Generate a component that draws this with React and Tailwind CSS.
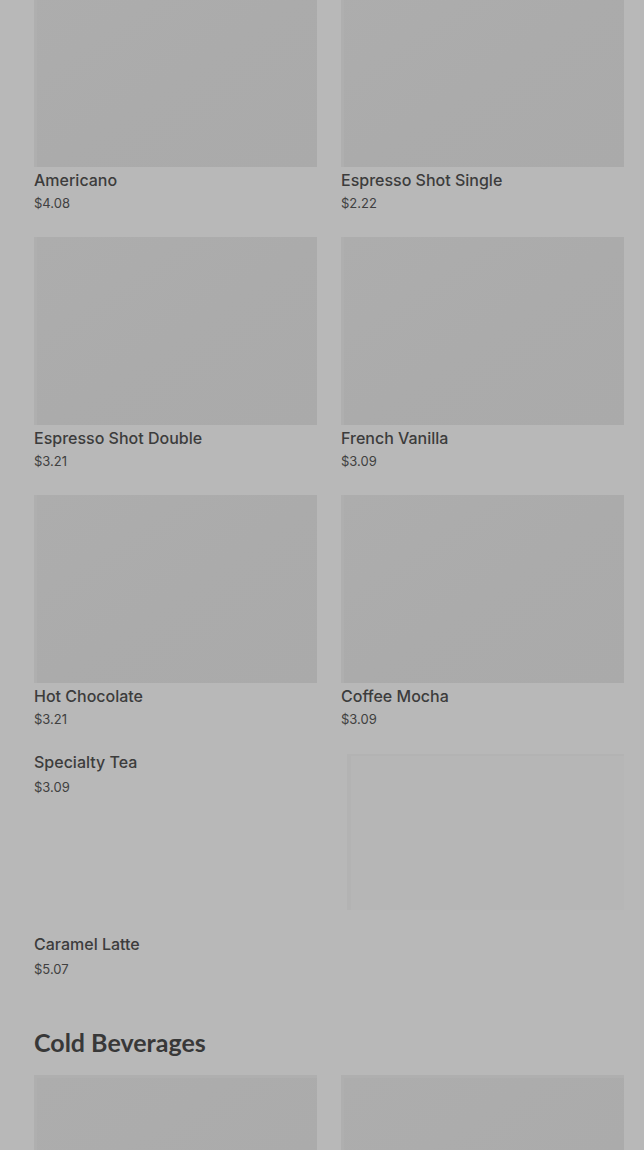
import React from "react";

const rows = [
  [
    { name: "Americano", price: "$4.08" },
    { name: "Espresso Shot Single", price: "$2.22" },
  ],
  [
    { name: "Espresso Shot Double", price: "$3.21" },
    { name: "French Vanilla", price: "$3.09" },
  ],
  [
    { name: "Hot Chocolate", price: "$3.21" },
    { name: "Coffee Mocha", price: "$3.09" },
  ],
];

const titleCls = "text-[16px] leading-[20px] font-medium text-[#3c3c3c] font-['Inter',sans-serif]";
const priceCls = "text-[13px] leading-[20px] text-[#404040] font-['Inter',sans-serif]";

function Card({ name, price }) {
  return (
    <div className="flex flex-col">
      <div className="h-[188px] bg-gradient-to-br from-[#adadad] via-[#ababab] to-[#aaaaaa] border-l-[3px] border-[#afafaf]" />
      <div className={"mt-[3px] " + titleCls}>{name}</div>
      <div className={"mt-[3px] " + priceCls}>{price}</div>
    </div>
  );
}

export default function App() {
  return (
    <div className="w-[644px] h-[1150px] overflow-hidden bg-[#b8b8b8] pl-[34px] pr-[20px]">
      <div className="-mt-[21px] grid grid-cols-2 gap-x-[24px] gap-y-[24px]">
        {rows.flat().map((it) => (
          <Card key={it.name} {...it} />
        ))}
        <div className="h-[158px] flex flex-col -mt-[1px]">
          <div className={titleCls}>Specialty Tea</div>
          <div className={"mt-[5px] " + priceCls}>$3.09</div>
        </div>
        <div className="h-[158px] pt-[1px] pl-[6px]">
          <div className="h-[156px] bg-[#b6b6b6] border-l-[4px] border-t-[2px] border-[#b3b3b3]" />
        </div>
        <div className="flex flex-col -mt-[1px]">
          <div className={titleCls}>Caramel Latte</div>
          <div className={"mt-[5px] " + priceCls}>$5.07</div>
        </div>
      </div>
      <h2 className="mt-[47px] text-[25px] leading-[32px] font-bold text-[#383838] font-['Lato',sans-serif]">Cold Beverages</h2>
      <div className="mt-[17px] grid grid-cols-2 gap-x-[24px]">
        <div className="h-[188px] bg-gradient-to-br from-[#adadad] to-[#aaaaaa] border-l-[3px] border-t-[3px] border-[#afafaf]" />
        <div className="h-[188px] bg-gradient-to-br from-[#adadad] to-[#aaaaaa] border-l-[3px] border-t-[3px] border-[#afafaf]" />
      </div>
    </div>
  );
}
